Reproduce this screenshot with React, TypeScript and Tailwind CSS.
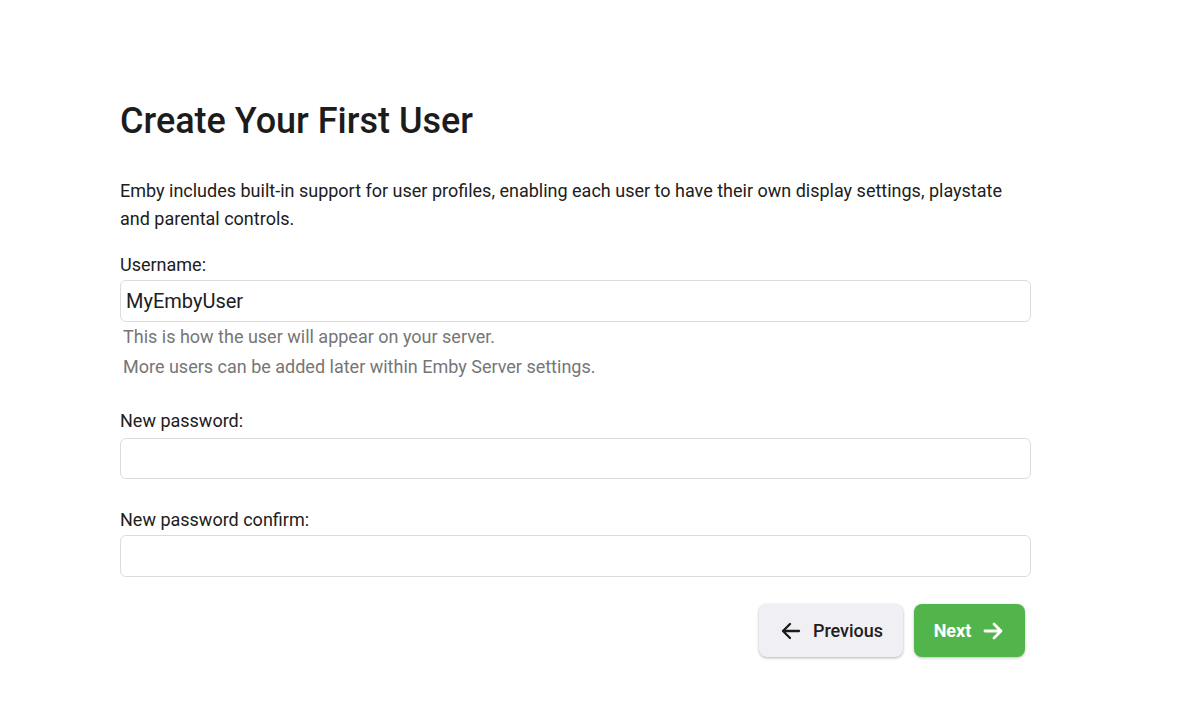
import React from "react";

export default function App() {
  return (
    <div className="min-h-[711px] w-full bg-white text-[#202020]" style={{ fontFamily: "Roboto, 'Noto Sans', sans-serif" }}>
      <div className="pl-[120px] pt-[97px] w-[1030px]">
        <h1 className="text-[36px] leading-[48px] font-medium text-[#1c1c1c]">Create Your First User</h1>
        <p className="mt-[32px] text-[18px] leading-[28px] text-[#202020]">
          Emby includes built-in support for user profiles, enabling each user to have their own display settings, playstate and parental controls.
        </p>
        <div className="mt-[20px]">
          <label className="block text-[18px] leading-[24px]">Username:</label>
          <div className="mt-[3px] h-[42px] w-[911px] rounded-[6px] border border-[#dcdcdc] flex items-center px-[5px] text-[20px]">
            MyEmbyUser
          </div>
          <div className="pl-[3px] text-[18px] leading-[30px] text-[#767676]">
            <div>This is how the user will appear on your server.</div>
            <div>More users can be added later within Emby Server settings.</div>
          </div>
        </div>
        <div className="mt-[27px]">
          <label className="block text-[18px] leading-[24px]">New password:</label>
          <div className="mt-[5px] h-[41px] w-[911px] rounded-[6px] border border-[#dcdcdc]" />
        </div>
        <div className="mt-[29px]">
          <label className="block text-[18px] leading-[24px]">New password confirm:</label>
          <div className="mt-[3px] h-[42px] w-[911px] rounded-[6px] border border-[#dcdcdc]" />
        </div>
        <div className="mt-[27px] w-[905px] flex justify-end gap-[11px]">
          <button className="h-[53px] w-[144px] rounded-[8px] bg-[#f0eff4] shadow-[0_1px_3px_rgba(0,0,0,0.3)] flex items-center justify-center gap-[10px] text-[18px] font-medium text-[#202020]">
            <svg width="24" height="24" viewBox="0 0 24 24" fill="none" stroke="#1a1a1a" strokeWidth="2.3" strokeLinecap="round" strokeLinejoin="round">
              <path d="M20 12H4M11 5l-7 7 7 7" />
            </svg>
            Previous
          </button>
          <button className="h-[53px] w-[111px] rounded-[8px] bg-[#52b54b] shadow-[0_1px_3px_rgba(0,0,0,0.25)] flex items-center justify-center gap-[10px] text-[18px] font-bold text-white">
            Next
            <svg width="24" height="24" viewBox="0 0 24 24" fill="none" stroke="#ffffff" strokeWidth="2.8" strokeLinecap="round" strokeLinejoin="round">
              <path d="M4 12h16M13 5l7 7-7 7" />
            </svg>
          </button>
        </div>
      </div>
    </div>
  );
}
